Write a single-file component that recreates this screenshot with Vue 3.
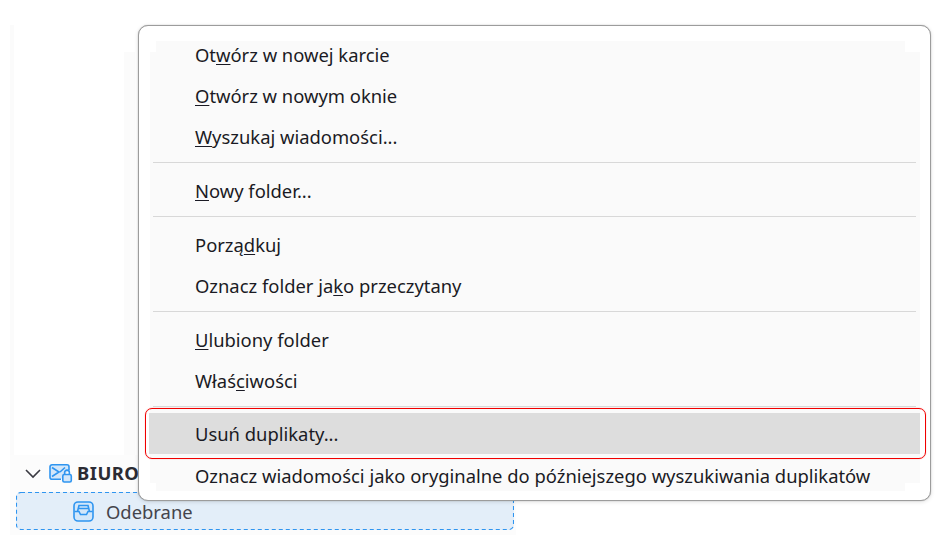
<script setup>
const groups = [
  [
    [['Ot'], ['w', 1], ['órz w nowej karcie']],
    [['O', 1], ['twórz w nowym oknie']],
    [['W', 1], ['yszukaj wiadomości...']],
  ],
  [[['N', 1], ['owy folder...']]],
  [
    [['Porzą'], ['d', 1], ['kuj']],
    [['Oznacz folder ja'], ['k', 1], ['o przeczytany']],
  ],
  [
    [['U', 1], ['lubiony folder']],
    [['Właś'], ['c', 1], ['iwości']],
  ],
]
</script>

<template>
  <div class="page">
    <aside class="sidebar">
      <div class="blank"><div class="blank-strip"></div></div>
      <div class="lower">
        <div class="account">
          <svg class="chevron" width="16" height="10" viewBox="0 0 16 10">
            <path d="M1 1l7 7 7-7" fill="none" stroke="#3a3a42" stroke-width="1.6" />
          </svg>
          <svg class="account-icon" width="24" height="19" viewBox="0 0 24 19">
            <path d="M12 15.200H3a2 2 0 0 1-2-2V2.800a2 2 0 0 1 2-2h15a2 2 0 0 1 2 2V6" fill="#d3e7fa" stroke="#2f95f0" stroke-width="1.600" />
            <path d="M3 3.500l7 4.500-7 4.500M11 8l5-4.500" fill="none" stroke="#2f95f0" stroke-width="1.600" />
            <rect x="13.800" y="10.500" width="8.500" height="7.500" rx="1.500" fill="#d3e7fa" stroke="#2f95f0" stroke-width="1.600" />
            <path d="M15.600 10.500V8.500a2.400 2.400 0 0 1 4.800 0v2" fill="none" stroke="#2f95f0" stroke-width="1.600" />
          </svg>
          <b class="account-name">BIURO</b>
        </div>
        <div class="folder">
          <svg class="dashes" width="498" height="38" viewBox="0 0 498 38">
            <rect x="0.500" y="0.500" width="497" height="37" rx="4.500" fill="none" stroke="#2f95f0" stroke-width="1.100" stroke-dasharray="4 3" />
          </svg>
          <svg width="21" height="21" viewBox="0 0 21 21">
            <rect x="1" y="1" width="19" height="19" rx="4" fill="#d3e7fa" stroke="#2f95f0" stroke-width="1.600" />
            <path d="M1.500 10.500h4.500l1.500 3h6l1.500-3h4.500M4.500 10.500l1.500-6h9l1.500 6M5.500 7.500h10" fill="none" stroke="#2f95f0" stroke-width="1.600" />
          </svg>
          <span>Odebrane</span>
        </div>
      </div>
    </aside>

    <div class="menu">
      <div class="menu-body">
        <template v-for="(group, g) in groups" :key="g">
          <div v-for="(item, i) in group" :key="i" class="item">
            <span v-for="(part, p) in item" :key="p" :class="{ key: part[1] }">{{ part[0] }}</span>
          </div>
          <div class="separator"></div>
        </template>
        <div class="item active">Usuń duplikaty...</div>
        <div class="item last">Oznacz wiadomości jako oryginalne do późniejszego wyszukiwania duplikatów</div>
      </div>
      <div class="outline"></div>
    </div>
  </div>
</template>

<style>
body {
  margin: 0;
  background: #fff;
}
</style>

<style scoped>
.page {
  position: relative;
  width: 952px;
  height: 554px;
  overflow: hidden;
  box-sizing: border-box;
  padding: 25px 0 0 10px;
  font-family: "Noto Sans", "Open Sans", sans-serif;
}
.sidebar {
  width: 506px;
  height: 510px;
  display: flex;
  flex-direction: column;
}
.blank {
  flex: 1;
  width: 110px;
  border-left: 4px solid #fbfbfb;
  padding: 27px 0 0 110px;
}
.blank-strip {
  width: 11px;
  height: 100%;
  background: #fbfbfb;
}
.lower {
  background: #fcfcfc;
  padding: 0 2px 5px 6px;
}
.account {
  height: 37px;
  display: flex;
  align-items: center;
}
.chevron {
  margin-left: 9px;
}
.account-icon {
  margin-left: 8px;
}
.account-name {
  margin: 0 0 2px 4px;
  font-size: 18.4px;
  color: #2b2b33;
  letter-spacing: 0.5px;
}
.folder {
  position: relative;
  height: 38px;
  box-sizing: border-box;
  border-radius: 5px;
  background: #e3eef9;
  display: flex;
  align-items: center;
  padding-left: 57px;
  gap: 12px;
  font-size: 18.4px;
  color: #44444c;
}
.dashes {
  position: absolute;
  left: 0;
  top: 0;
}
.menu {
  position: absolute;
  left: 138px;
  top: 25px;
  width: 793px;
  height: 476px;
  box-sizing: border-box;
  padding-top: 9px;
  background: #fff;
  border: 1px solid #9c9c9c;
  border-radius: 10px;
  box-shadow: 0 0 1px rgba(0, 0, 0, 0.35), 0 1px 4px rgba(0, 0, 0, 0.12);
}
.menu::before,
.menu::after {
  content: "";
  position: absolute;
  background: #fafafa;
}
.menu::before {
  left: 17px;
  right: 25px;
  top: 15px;
  bottom: 9px;
}
.menu::after {
  left: 11px;
  right: 10px;
  top: 26px;
  bottom: 17px;
}
.menu-body {
  position: relative;
  z-index: 1;
  margin: 0 10px;
  font-size: 18.4px;
  color: #1a1a24;
  display: flex;
  flex-direction: column;
}
.item {
  height: 41px;
  flex: none;
  line-height: 40px;
  padding-left: 46px;
  white-space: nowrap;
}
.key {
  text-decoration: underline;
  text-underline-offset: 2px;
  text-decoration-thickness: 1px;
}
.separator {
  height: 1px;
  flex: none;
  margin: 4px 4px 8px 4px;
  background: #d8d8d8;
}
.active {
  background: #dddddd;
  margin-top: -2px;
  line-height: 42px;
}
.last {
  margin-top: 2px;
}
.outline {
  position: absolute;
  z-index: 2;
  left: 6px;
  right: 4px;
  top: 382px;
  height: 51px;
  box-sizing: border-box;
  border: 1px solid #f00000;
  border-radius: 7px;
  box-shadow: 0 0 1px rgba(255, 0, 0, 0.5);
  pointer-events: none;
}
</style>
